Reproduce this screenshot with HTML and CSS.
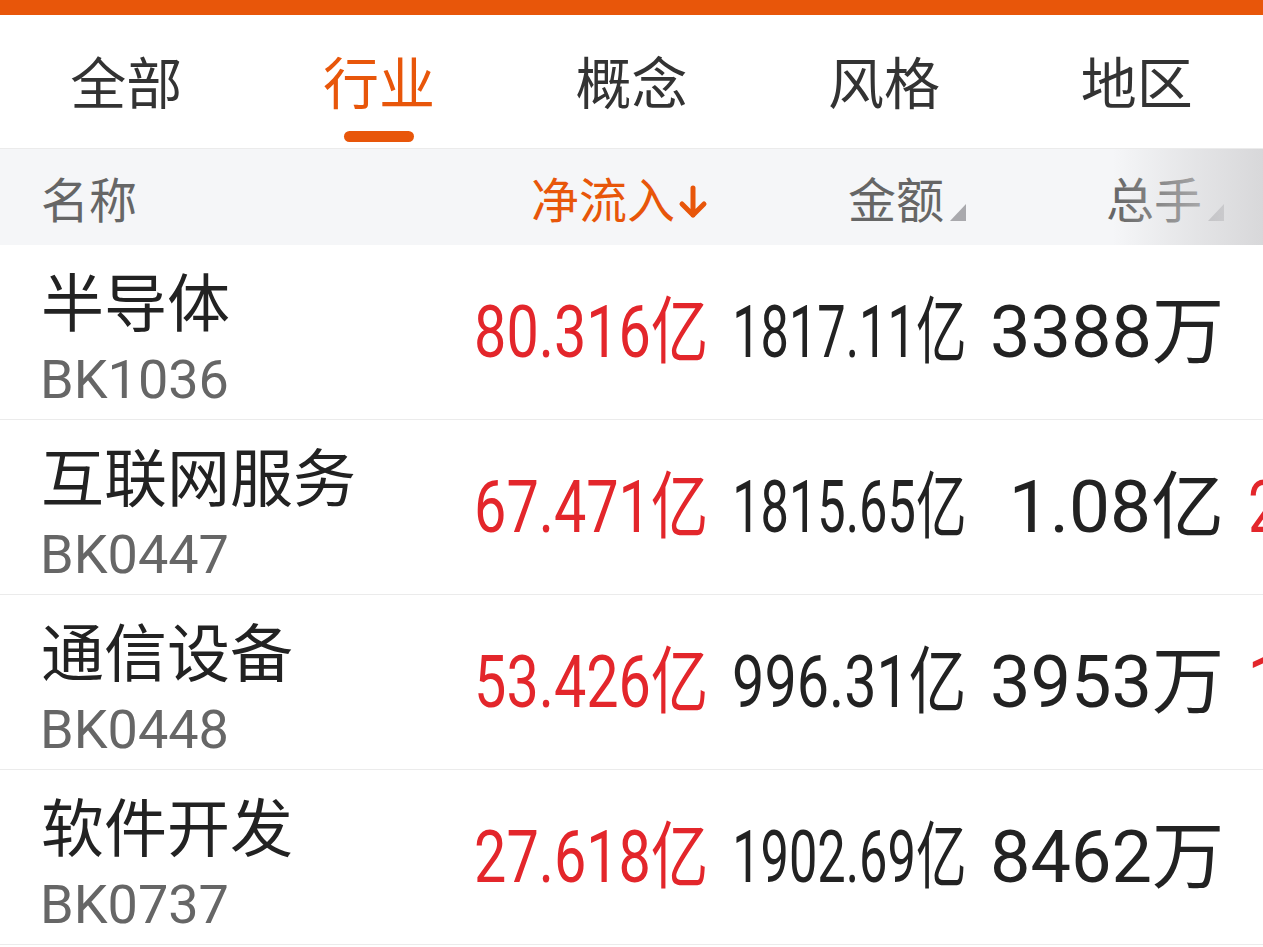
FILE: index.html
```html
<!DOCTYPE html>
<html lang="zh-CN">
<head>
<meta charset="utf-8">
<title>行业资金流</title>
<link rel="stylesheet" href="styles.css">
</head>
<body>
<div class="app">
  <div class="topbar"></div>
  <nav class="tabs">
    <div class="tab"><span class="tab-label">全部</span><span class="tab-line"></span></div>
    <div class="tab active"><span class="tab-label">行业</span><span class="tab-line"></span></div>
    <div class="tab"><span class="tab-label">概念</span><span class="tab-line"></span></div>
    <div class="tab"><span class="tab-label">风格</span><span class="tab-line"></span></div>
    <div class="tab"><span class="tab-label">地区</span><span class="tab-line"></span></div>
  </nav>
  <div class="table">
    <div class="thead">
      <div class="name-col"><span class="th">名称</span></div>
      <div class="num-col"><span class="th th-active">净流入</span><svg class="arrow" viewBox="0 0 30 34" width="30" height="34"><path d="M15 3 V30 M4 19 L15 30 L26 19" fill="none" stroke="#e8560a" stroke-width="5" stroke-linecap="round" stroke-linejoin="round"/></svg></div>
      <div class="num-col"><span class="th">金额</span><svg class="tri" viewBox="0 0 16 17" width="16" height="17"><path d="M16 0 L16 17 L0 17 Z" fill="#a9a9ad"/></svg></div>
      <div class="num-col"><span class="th">总手</span><svg class="tri" viewBox="0 0 16 17" width="16" height="17"><path d="M16 0 L16 17 L0 17 Z" fill="#a9a9ad"/></svg></div>
      <div class="num-col"></div>
      <div class="fade"></div>
    </div>

    <div class="row">
      <div class="name-col name-cell"><div class="name">半导体</div><div class="code">BK1036</div></div>
      <div class="num-col"><span class="val red">80.316亿</span></div>
      <div class="num-col"><span class="val dark">1817.11亿</span></div>
      <div class="num-col"><span class="val dark">3388万</span></div>
      <div class="num-col"></div>
    </div>
    <div class="row">
      <div class="name-col name-cell"><div class="name">互联网服务</div><div class="code">BK0447</div></div>
      <div class="num-col"><span class="val red">67.471亿</span></div>
      <div class="num-col"><span class="val dark">1815.65亿</span></div>
      <div class="num-col"><span class="val dark">1.08亿</span></div>
      <div class="num-col"><span class="val red">2.1436亿</span></div>
    </div>
    <div class="row">
      <div class="name-col name-cell"><div class="name">通信设备</div><div class="code">BK0448</div></div>
      <div class="num-col"><span class="val red">53.426亿</span></div>
      <div class="num-col"><span class="val dark">996.31亿</span></div>
      <div class="num-col"><span class="val dark">3953万</span></div>
      <div class="num-col"><span class="val red">1.2875亿</span></div>
    </div>
    <div class="row">
      <div class="name-col name-cell"><div class="name">软件开发</div><div class="code">BK0737</div></div>
      <div class="num-col"><span class="val red">27.618亿</span></div>
      <div class="num-col"><span class="val dark">1902.69亿</span></div>
      <div class="num-col"><span class="val dark">8462万</span></div>
      <div class="num-col"></div>
    </div>
  </div>
</div>
<script src="script.js"></script>
</body>
</html>
```

FILE: styles.css
```css
html, body {
  margin: 0;
  padding: 0;
  background: #ffffff;
  overflow: hidden;
}

body {
  width: 1263px;
  height: 947px;
  font-family: Roboto, "Noto Sans CJK SC", sans-serif;
}

.app {
  width: 1263px;
  height: 947px;
  overflow: hidden;
}

.topbar {
  height: 15px;
  background: #e8560a;
}

.tabs {
  display: flex;
  height: 134px;
  box-sizing: border-box;
  border-bottom: 1px solid #ebebeb;
}

.tab {
  flex: 1 1 0;
  display: flex;
  flex-direction: column;
  align-items: center;
  padding-top: 37px;
}

.tab-label {
  font-family: "Noto Sans CJK SC", sans-serif;
  font-size: 56px;
  line-height: 56px;
  height: 56px;
  color: #333333;
  white-space: nowrap;
}

.tab-line {
  width: 70px;
  height: 11px;
  margin-top: 23px;
  border-radius: 6px;
  background: transparent;
}

.tab.active .tab-label {
  color: #e8560a;
}

.tab.active .tab-line {
  background: #e8560a;
}

.table {
  width: 1263px;
  overflow: hidden;
}

.thead {
  position: relative;
  display: flex;
  align-items: center;
  height: 96px;
  background: #f5f6f8;
}

.fade {
  position: absolute;
  top: 0;
  right: 0;
  bottom: 0;
  width: 150px;
  background: linear-gradient(to right, rgba(214, 214, 216, 0), rgba(214, 214, 216, 0.55) 55%, rgba(214, 214, 216, 0.95));
  pointer-events: none;
}

.name-col {
  width: 450px;
  flex-shrink: 0;
  box-sizing: border-box;
  padding-left: 41px;
}

.num-col {
  width: 258px;
  flex-shrink: 0;
  box-sizing: border-box;
  padding-left: 24px;
  display: flex;
  justify-content: flex-end;
  align-items: center;
}

.thead .num-col {
  align-items: flex-end;
}

.th {
  font-family: "Noto Sans CJK SC", sans-serif;
  font-size: 48px;
  line-height: 48px;
  color: #666666;
  white-space: nowrap;
}

.thead .name-col .th {
  display: block;
}

.th-active {
  color: #e8560a;
}

.arrow {
  display: block;
  margin-left: 3px;
  margin-bottom: 2px;
  flex-shrink: 0;
}

.tri {
  display: block;
  margin-left: 6px;
  flex-shrink: 0;
}

.row {
  display: flex;
  align-items: center;
  height: 175px;
  box-sizing: border-box;
  border-bottom: 1px solid #ebebeb;
}

.name-cell {
  align-self: flex-start;
  padding-top: 23px;
}

.name {
  font-family: "Noto Sans CJK SC", sans-serif;
  font-size: 63px;
  line-height: 62px;
  color: #222222;
  white-space: nowrap;
}

.code {
  font-family: Roboto, "Noto Sans CJK SC", sans-serif;
  font-size: 54px;
  line-height: 54px;
  color: #666666;
  margin-top: 23px;
  margin-left: -1px;
  white-space: nowrap;
}

.val {
  display: inline-block;
  flex-shrink: 0;
  font-family: Roboto, "Noto Sans CJK SC", sans-serif;
  font-size: 73px;
  line-height: 73px;
  white-space: nowrap;
  transform-origin: right center;
}

.red {
  color: #e3262b;
}

.dark {
  color: #222222;
}
```

FILE: script.js
```js
(function () {
  var items = document.querySelectorAll('.val');
  for (var i = 0; i < items.length; i++) {
    var el = items[i];
    var box = el.parentElement;
    var cs = window.getComputedStyle(box);
    var avail = box.clientWidth - parseFloat(cs.paddingLeft) - parseFloat(cs.paddingRight);
    var w = el.offsetWidth;
    if (w > avail && w > 0) {
      el.style.transform = 'scaleX(' + (avail / w).toFixed(4) + ')';
    }
  }
})();
```
